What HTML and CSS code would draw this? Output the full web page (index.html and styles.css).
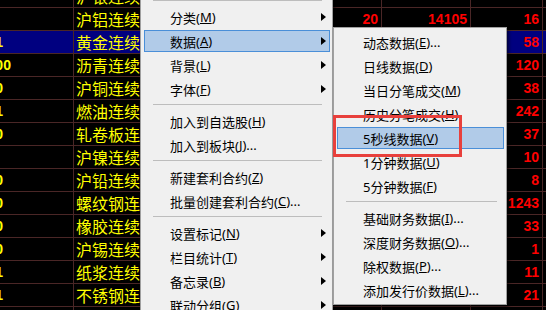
FILE: index.html
```html
<!DOCTYPE html>
<html>
<head>
    <title>行情列表</title>
    <link rel="stylesheet" href="styles.css">
</head>
<body>
    <div class="screen">
        <div class="grid">
            <div class="row"><div class="c a"></div><div class="c b">沪银连续</div><div class="c c3"></div><div class="c d"></div><div class="c e"></div><div class="c f"></div><div class="c g"></div><div class="c h"></div></div>
            <div class="row"><div class="c a">895</div><div class="c b">沪铝连续</div><div class="c c3"></div><div class="c d"></div><div class="c e">20</div><div class="c f">14105</div><div class="c g">16</div><div class="c h"></div></div>
            <div class="row sel"><div class="c a">3781</div><div class="c b">黄金连续</div><div class="c c3"></div><div class="c d"></div><div class="c e"></div><div class="c f"></div><div class="c g">58</div><div class="c h"></div></div>
            <div class="row"><div class="c a">13600</div><div class="c b">沥青连续</div><div class="c c3"></div><div class="c d"></div><div class="c e"></div><div class="c f"></div><div class="c g">120</div><div class="c h"></div></div>
            <div class="row"><div class="c a">2150</div><div class="c b">沪铜连续</div><div class="c c3"></div><div class="c d"></div><div class="c e"></div><div class="c f"></div><div class="c g">38</div><div class="c h"></div></div>
            <div class="row"><div class="c a">3461</div><div class="c b">燃油连续</div><div class="c c3"></div><div class="c d"></div><div class="c e"></div><div class="c f"></div><div class="c g">242</div><div class="c h"></div></div>
            <div class="row"><div class="c a">4320</div><div class="c b">轧卷板连续</div><div class="c c3"></div><div class="c d"></div><div class="c e"></div><div class="c f"></div><div class="c g">37</div><div class="c h"></div></div>
            <div class="row"><div class="c a">512</div><div class="c b">沪镍连续</div><div class="c c3"></div><div class="c d"></div><div class="c e"></div><div class="c f"></div><div class="c g">10</div><div class="c h"></div></div>
            <div class="row"><div class="c a">1730</div><div class="c b">沪铅连续</div><div class="c c3"></div><div class="c d"></div><div class="c e"></div><div class="c f"></div><div class="c g">8</div><div class="c h"></div></div>
            <div class="row"><div class="c a">3640</div><div class="c b">螺纹钢连续</div><div class="c c3"></div><div class="c d"></div><div class="c e"></div><div class="c f"></div><div class="c g">1243</div><div class="c h"></div></div>
            <div class="row"><div class="c a">1250</div><div class="c b">橡胶连续</div><div class="c c3"></div><div class="c d"></div><div class="c e"></div><div class="c f"></div><div class="c g">33</div><div class="c h"></div></div>
            <div class="row"><div class="c a">1460</div><div class="c b">沪锡连续</div><div class="c c3"></div><div class="c d"></div><div class="c e"></div><div class="c f"></div><div class="c g">1</div><div class="c h"></div></div>
            <div class="row"><div class="c a">4571</div><div class="c b">纸浆连续</div><div class="c c3"></div><div class="c d"></div><div class="c e"></div><div class="c f"></div><div class="c g">11</div><div class="c h"></div></div>
            <div class="row"><div class="c a">1331</div><div class="c b">不锈钢连续</div><div class="c c3"></div><div class="c d"></div><div class="c e"></div><div class="c f"></div><div class="c g">21</div><div class="c h"></div></div>
            <div class="row"><div class="c a">2210</div><div class="c b">线材连续</div><div class="c c3"></div><div class="c d"></div><div class="c e"></div><div class="c f"></div><div class="c g"></div><div class="c h"></div></div>
        </div>

        <div class="menu main">
            <div class="sep"></div>
            <div class="item">分类(<u>M</u>)<span class="arrow"></span></div>
            <div class="item hot">数据(<u>A</u>)<span class="arrow"></span></div>
            <div class="item">背景(<u>L</u>)<span class="arrow"></span></div>
            <div class="item">字体(<u>F</u>)<span class="arrow"></span></div>
            <div class="sep"></div>
            <div class="item">加入到自选股(<u>H</u>)</div>
            <div class="item">加入到板块(<u>J</u>)...</div>
            <div class="sep"></div>
            <div class="item">新建套利合约(<u>Z</u>)</div>
            <div class="item">批量创建套利合约(<u>C</u>)...</div>
            <div class="sep"></div>
            <div class="item">设置标记(<u>N</u>)<span class="arrow"></span></div>
            <div class="item">栏目统计(<u>T</u>)<span class="arrow"></span></div>
            <div class="item">备忘录(<u>B</u>)<span class="arrow"></span></div>
            <div class="item">联动分组(<u>G</u>)<span class="arrow"></span></div>
        </div>

        <div class="menu sub">
            <div class="item">动态数据(<u>E</u>)...</div>
            <div class="item">日线数据(<u>D</u>)</div>
            <div class="item">当日分笔成交(<u>M</u>)</div>
            <div class="item">历史分笔成交(<u>H</u>)</div>
            <div class="item hot">5秒线数据(<u>V</u>)</div>
            <div class="item">1分钟数据(<u>U</u>)</div>
            <div class="item">5分钟数据(<u>F</u>)</div>
            <div class="sep"></div>
            <div class="item">基础财务数据(<u>I</u>)...</div>
            <div class="item">深度财务数据(<u>O</u>)...</div>
            <div class="item">除权数据(<u>P</u>)...</div>
            <div class="item">添加发行价数据(<u>L</u>)...</div>
        </div>

        <div class="mark"></div>
    </div>
</body>
</html>
```

FILE: styles.css
```css
html, body { margin: 0; padding: 0; background: #000; }
.screen { position: relative; width: 546px; height: 310px; overflow: hidden; background: #000; }

/* quote table */
.grid { margin-top: -15px; }
.row { display: flex; height: 23px; border-bottom: 1px solid #4a2626; box-sizing: border-box; }
.row.sel { background: #000080; }
.c { flex: none; box-sizing: border-box; border-right: 1px solid #4a2626; height: 22px; line-height: 22px; white-space: nowrap; overflow: hidden; font-family: "Liberation Sans", Arial, sans-serif; font-weight: bold; font-size: 14px; color: #ff0000; text-align: right; padding-right: 3px; }
.c.a { width: 74px; color: #ffff00; text-align: left; text-indent: -28px; padding-right: 0; }
.c.b { width: 90px; color: #ffff00; text-align: left; padding: 0 0 0 2px; font-family: "Noto Sans CJK SC", sans-serif; font-weight: normal; font-size: 16px; }
.c.c3 { width: 80px; }
.c.d { width: 70px; }
.c.e { width: 68px; }
.c.f { width: 89px; }
.c.g { width: 72px; }
.c.h { flex: 1; border-right: none; }

/* popup menus */
.menu { position: absolute; display: flex; flex-direction: column; box-sizing: border-box; background: #f0f0f0; border: 1px solid #a0a0a0; box-shadow: 2px 2px 3px rgba(0, 0, 0, 0.55); font-family: "Noto Sans", "Noto Sans CJK SC", sans-serif; font-size: 13px; color: #000; }
.menu.main { left: 140px; top: -3px; width: 193px; height: 330px; padding: 0 2px 0 3px; }
.menu.sub { left: 333px; top: 27px; width: 174px; padding: 2px 2px 2px 3px; }
.item { flex: none; display: flex; align-items: center; height: 22px; margin: 1px 0; padding-left: 25px; border: 1px solid transparent; box-sizing: border-box; white-space: nowrap; }
.item u { text-underline-offset: 1px; }
.item.hot { background: #b1cbe8; border-color: #4a8fd8; }
.arrow { margin-left: auto; margin-right: 3px; width: 0; height: 0; border-left: 5px solid #000; border-top: 4px solid transparent; border-bottom: 4px solid transparent; }
.sep { flex: none; height: 1px; background: #bdbdbd; margin: 3px 8px 4px 9px; }
.menu.main .sep:first-child { margin-top: 2px; }
.menu.sub .sep { margin: 3px 7px 4px 9px; }

/* red annotation box */
.mark { position: absolute; left: 333px; top: 115px; width: 129px; height: 42px; box-sizing: border-box; border: 3px solid #e8403c; }
```
